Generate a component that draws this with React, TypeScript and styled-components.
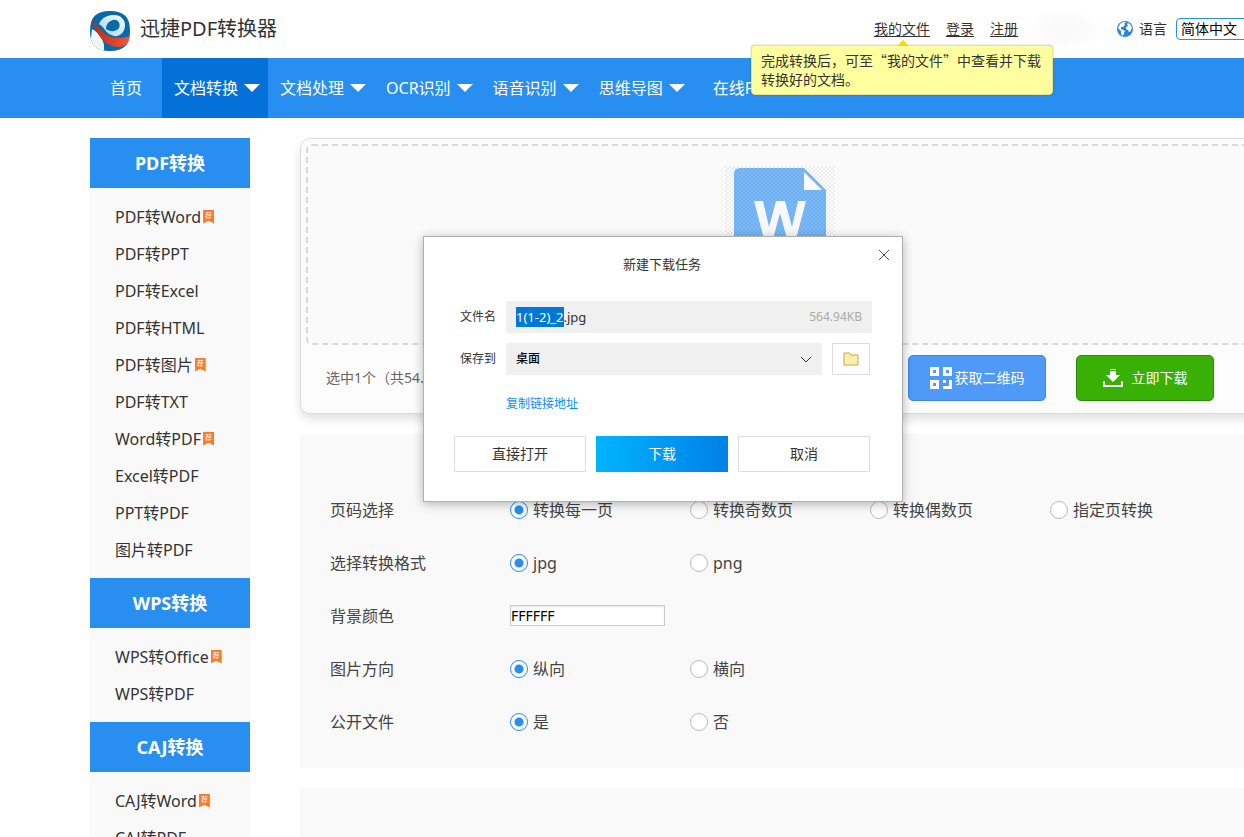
import React, { useEffect, useId, useRef } from "react";
import styled, { createGlobalStyle, css } from "styled-components";

const GlobalStyle = createGlobalStyle`
  * { box-sizing: border-box; }
  body {
    margin: 0;
    background: #fff;
    color: #333;
    font-family: "Noto Sans", "Noto Sans CJK SC", sans-serif;
    font-size: 16px;
  }
  button, input, select { font: inherit; }
`;

const Page = styled.div`
  position: relative;
  min-height: 100vh;
  max-height: 100vh;
  overflow: hidden;
`;

/* ---------- header ---------- */

const Header = styled.header`
  display: flex;
  align-items: center;
  height: 58px;
  padding-left: 90px;
  margin-right: -16px;
`;

const Brand = styled.a`
  display: flex;
  align-items: center;
  gap: 10px;
  margin-right: auto;
  color: #333;
  font-size: 20px;
  line-height: 28px;
  text-decoration: none;
  svg { margin-top: 4px; }
`;

const UserLinks = styled.nav`
  display: flex;
  gap: 16px;
  font-size: 14px;
  line-height: 20px;
  a { color: #333; text-underline-offset: 2px; }
`;

const Smudge = styled.div`
  width: 80px;
  height: 40px;
  margin: 0 13px 0 6px;
  border-radius: 50%;
  background: radial-gradient(closest-side, #fafafa 50%, #fff);
`;

const Language = styled.label`
  display: flex;
  align-items: center;
  font-size: 14px;
  line-height: 20px;
  svg { margin-right: 6px; }
`;

const LanguageSelect = styled.select`
  width: 84px;
  height: 22px;
  margin-left: 9px;
  padding: 0 4px;
  appearance: none;
  border: 1px solid #288ef0;
  border-radius: 4px;
  background: #fff;
  color: #000;
  font-size: 14px;
  line-height: 20px;
`;

const Tip = styled.div`
  position: absolute;
  top: 45px;
  left: 751px;
  z-index: 2;
  width: 302px;
  padding: 5px 9px;
  border: 1px solid #e8e48c;
  border-radius: 4px;
  background: #ffff9f;
  box-shadow: 0 0 2px rgba(0, 0, 0, 0.25);
  font-size: 14px;
  line-height: 19px;
  font-family: "Noto Sans CJK SC", sans-serif;
  &::before {
    content: "";
    position: absolute;
    top: -6px;
    left: 145px;
    border: 6px solid transparent;
    border-top: 0;
    border-bottom-color: #ffd800;
  }
`;

/* ---------- main navigation ---------- */

const NavBar = styled.nav`
  display: flex;
  height: 60px;
  padding-left: 90px;
  background: #288ef0;
`;

const NavLink = styled.a<{ $active?: boolean; $menu?: boolean }>`
  display: flex;
  align-items: center;
  gap: 6px;
  padding: ${(p) => (p.$menu ? "0 8px 0 12px" : "0 20px")};
  background: ${(p) => (p.$active ? "#0470d8" : "transparent")};
  color: #fff;
  line-height: 24px;
  white-space: nowrap;
  text-decoration: none;
`;

const Caret = styled.span`
  border: 8px solid transparent;
  border-top-color: #fff;
  border-bottom: 0;
`;

/* ---------- body columns ---------- */

const Columns = styled.div`
  display: flex;
  gap: 50px;
  margin: 20px -16px 0 90px;
`;

const Sidebar = styled.aside`
  flex: 0 0 160px;
  background: #f9f9f9;
`;

const SideTitle = styled.h2`
  margin: 0;
  background: #288ef0;
  color: #fff;
  font-size: 18px;
  font-weight: 700;
  line-height: 50px;
  text-align: center;
`;

const SideList = styled.ul`
  margin: 0;
  padding: 10px 0 10px 25px;
  list-style: none;
`;

const SideItem = styled.li`
  display: flex;
  align-items: center;
  gap: 2px;
  height: 37px;
  a { color: #333; line-height: 24px; text-decoration: none; }
`;

const Ribbon = styled.span`
  width: 11px;
  height: 14px;
  background: #ff7a22;
  clip-path: polygon(0 0, 100% 0, 100% 100%, 50% 80%, 0 100%);
  color: #fff;
  font-size: 7px;
  line-height: 12px;
  text-align: center;
`;

const Main = styled.main`
  flex: 1;
  min-width: 0;
  display: flex;
  flex-direction: column;
  gap: 20px;
`;

const UploadCard = styled.section`
  padding: 5px;
  border: 1px solid #dcdcdc;
  border-radius: 10px;
  background: #fcfcfc;
  box-shadow: 0 5px 10px rgba(0, 0, 0, 0.12);
`;

const DropZone = styled.div`
  display: flex;
  justify-content: center;
  height: 201px;
  padding-top: 20px;
  border: 2px dashed #d9d9d9;
  border-radius: 6px;
  background: #fafafa;
`;

const UploadFooter = styled.div`
  display: flex;
  align-items: center;
  gap: 30px;
  padding: 10px 40px 7px 20px;
`;

const Selected = styled.span`
  margin-right: auto;
  color: #666;
  font-size: 14px;
  line-height: 20px;
`;

const ActionButton = styled.button<{ $green?: boolean }>`
  display: flex;
  align-items: center;
  justify-content: center;
  gap: ${(p) => (p.$green ? "9px" : "3px")};
  width: 138px;
  height: 46px;
  padding: 0;
  border: 1px solid ${(p) => (p.$green ? "#2a8a06" : "#3a86e2")};
  border-radius: 5px;
  background: ${(p) => (p.$green ? "#38b006" : "#4f9af7")};
  color: #fff;
  font-size: 14px;
  line-height: 20px;
`;

const Options = styled.form`
  padding: 49px 0 20px 30px;
  background: #f9f9f9;
`;

const OptionRow = styled.div`
  display: flex;
  align-items: center;
  height: 53px;
  color: #444;
  line-height: 24px;
`;

const OptionName = styled.span`
  flex: 0 0 180px;
`;

const Choice = styled.label`
  flex: 0 0 180px;
  display: flex;
  align-items: center;
  gap: 5px;
`;

const Radio = styled.input`
  appearance: none;
  width: 18px;
  height: 18px;
  margin: 0;
  border: 1px solid #bbb;
  border-radius: 50%;
  background: #fff;
  &:checked {
    border-color: #288ef0;
    background: radial-gradient(circle, #288ef0 0 4px, #fff 5px);
  }
`;

const ColorInput = styled.input`
  width: 155px;
  height: 21px;
  padding: 0;
  border: 1px solid #ccc;
  background: #fff;
  box-shadow: inset 0 1px 2px rgba(0, 0, 0, 0.1);
  color: #000;
  font-size: 14px;
`;

const NextPanel = styled.section`
  height: 200px;
  background: #f9f9f9;
`;

/* ---------- download dialog ---------- */

const Dialog = styled.div`
  position: absolute;
  top: 236px;
  left: 423px;
  z-index: 3;
  width: 480px;
  padding: 17px 32px 29px 30px;
  border: 1px solid #b0b0b0;
  background: #fff;
  box-shadow: 0 2px 10px rgba(0, 0, 0, 0.28);
  font-size: 12px;
  line-height: 20px;
`;

const DialogTitle = styled.h1`
  margin: 0 0 27px;
  font-size: 13px;
  font-weight: 400;
  line-height: 20px;
  text-align: center;
`;

const CloseButton = styled.button`
  position: absolute;
  top: 12px;
  right: 12px;
  display: flex;
  padding: 0;
  border: 0;
  background: none;
`;

const Field = styled.div`
  display: flex;
  align-items: center;
  gap: 10px;
  margin-bottom: 10px;
  padding-left: 6px;
  label { flex: 0 0 36px; white-space: nowrap; }
`;

const fieldBox = css`
  display: flex;
  align-items: center;
  height: 32px;
  padding: 0 10px;
  background: #f0f0f0;
`;

const FileBox = styled.div`
  ${fieldBox}
  flex: 1;
  margin-right: -2px;
  color: #aaa;
`;

const FileInput = styled.input`
  flex: 1;
  min-width: 0;
  padding: 0;
  border: 0;
  outline: 0;
  background: none;
  color: #333;
  font-size: 13px;
  &::selection { background: #0078d7; color: #fff; }
`;

const FolderBox = styled.div`
  position: relative;
  flex: 1;
  svg { position: absolute; top: 13px; right: 10px; pointer-events: none; }
`;

const FolderSelect = styled.select`
  ${fieldBox}
  width: 100%;
  appearance: none;
  border: 0;
  border-radius: 0;
  color: #000;
  font-weight: 500;
`;

const BrowseButton = styled.button`
  display: flex;
  align-items: center;
  justify-content: center;
  width: 38px;
  height: 32px;
  padding: 0;
  border: 1px solid #dedede;
  background: #fff;
`;

const CopyLink = styled.a`
  display: block;
  margin: 19px 0 22px 52px;
  color: #0a8cff;
  text-decoration: none;
`;

const DialogActions = styled.div`
  display: flex;
  gap: 10px;
`;

const DialogButton = styled.button<{ $primary?: boolean }>`
  width: 132px;
  height: 36px;
  padding: 0;
  border: ${(p) => (p.$primary ? "0" : "1px solid #dedede")};
  background: ${(p) => (p.$primary ? "linear-gradient(90deg, #00b4ff, #0080e6)" : "#fff")};
  color: ${(p) => (p.$primary ? "#fff" : "#333")};
  font-size: 14px;
  line-height: 20px;
`;

/* ---------- drawings ---------- */

const Logo = () => (
  <svg width="40" height="40" viewBox="0 0 40 40" aria-hidden="true">
    <defs>
      <clipPath id="logo-shape">
        <path d="M20 0C34 0 40 6 40 20S34 40 20 40 0 34 0 20 6 0 20 0Z" />
      </clipPath>
      <linearGradient id="logo-red" x1="0" x2="1">
        <stop offset="0" stopColor="#c6260f" />
        <stop offset="1" stopColor="#f0573d" />
      </linearGradient>
      <linearGradient id="logo-ring" x1="0" x2="1" y1="1" y2="0">
        <stop offset="0" stopColor="#a9d5ee" />
        <stop offset="1" stopColor="#f4fbff" />
      </linearGradient>
    </defs>
    <g clipPath="url(#logo-shape)">
      <rect width="40" height="40" fill="#0a69a8" />
      <path d="M2 18C8 21 13 28 14 34L14 40H5L0 36Z" fill="#eef7fc" />
      <path
        fillRule="evenodd"
        d="M9 13C12 6 18 4 24 4C31 4 35 9 35 14C35 21 30 26 24 25C20 24 17 22 15 19C14 17 12 15 9 13ZM16 18C20 21 26 21 29 17C31 13 28 8 23 9C19 10 16 13 16 18Z"
        fill="url(#logo-ring)"
      />
      <path d="M2 8C9 18 16 27 27 27C33 27 37 26 40 25V30C37 34 33 36 28 36C15 36 5 22 2 8Z" fill="url(#logo-red)" />
    </g>
  </svg>
);

const Globe = () => (
  <svg width="16" height="16" viewBox="0 0 16 16" aria-hidden="true">
    <circle cx="8" cy="8" r="8" fill="#2a86dc" />
    <path d="M3 3L6 1L9 1L7 3L8 4L6 6L4 6L4 8L6 9L8 10L7 12L6 15L4 13L4 10L1 7Z" fill="#fff" />
    <path d="M11 2L13 3L15 7L14 9L13 11L12 11L11 9L9 8L9 6L11 5L10 3Z" fill="#fff" />
  </svg>
);

const WordFile = () => (
  <svg width="110" height="110" viewBox="0 0 110 110" aria-hidden="true">
    <defs>
      <pattern id="checks" width="4" height="4" patternUnits="userSpaceOnUse">
        <rect width="4" height="4" fill="#fff" />
        <path d="M0 0H2V2H0ZM2 2H4V4H2Z" fill="#ececec" />
      </pattern>
      <pattern id="blue-checks" width="4" height="4" patternUnits="userSpaceOnUse">
        <rect width="4" height="4" fill="#7ab8f7" />
        <path d="M0 0H2V2H0ZM2 2H4V4H2Z" fill="#72b1f0" />
      </pattern>
    </defs>
    <rect width="110" height="110" fill="url(#checks)" />
    <path d="M15 2H79L101 24V108H9V8Q9 2 15 2Z" fill="url(#blue-checks)" />
    <path d="M79 6V24H97Z" fill="#fbfbfb" />
    <path d="M29 35H38L44 61L51 35H60L67 61L73 35H81L71 73H62L55 47L48 73H39Z" fill="#f8f8f8" />
  </svg>
);

const QrIcon = () => (
  <svg width="22" height="22" viewBox="0 0 22 22" fill="#fff" aria-hidden="true">
    <path fillRule="evenodd" d="M0 0H9V9H0ZM3 3V6H6V3ZM13 0H22V9H13ZM16 3V6H19V3ZM0 13H9V22H0ZM3 16V19H6V16Z" />
    <path d="M13 13H16V16H13ZM19 13H22V22H13V19H19Z" />
  </svg>
);

const DownloadIcon = () => (
  <svg width="20" height="18" viewBox="0 0 20 18" fill="#fff" aria-hidden="true">
    <path d="M7 0H13V1H7ZM7 2H13V6H17L10 13L3 6H7ZM0 12H2V16H18V12H20V18H0Z" />
  </svg>
);

const FolderIcon = () => (
  <svg width="16" height="14" viewBox="0 0 16 14" aria-hidden="true">
    <path d="M1 1H6L8 3H15V13H1Z" fill="#fff0b0" stroke="#c9a548" />
  </svg>
);

/* ---------- data ---------- */

const navItems = [
  { text: "首页" },
  { text: "文档转换", menu: true, active: true },
  { text: "文档处理", menu: true },
  { text: "OCR识别", menu: true },
  { text: "语音识别", menu: true },
  { text: "思维导图", menu: true },
  { text: "在线PDF" },
];

const sideGroups = [
  {
    title: "PDF转换",
    items: ["PDF转Word*", "PDF转PPT", "PDF转Excel", "PDF转HTML", "PDF转图片*", "PDF转TXT", "Word转PDF*", "Excel转PDF", "PPT转PDF", "图片转PDF"],
  },
  { title: "WPS转换", items: ["WPS转Office*", "WPS转PDF"] },
  { title: "CAJ转换", items: ["CAJ转Word*", "CAJ转PDF"] },
];

const RadioRow = ({ name, choices }: { name: string; choices: string[] }) => {
  const id = useId();
  return (
    <OptionRow role="radiogroup" aria-labelledby={id}>
      <OptionName id={id}>{name}</OptionName>
      {choices.map((choice, i) => (
        <Choice key={choice}>
          <Radio type="radio" name={name} defaultChecked={i === 0} />
          {choice}
        </Choice>
      ))}
    </OptionRow>
  );
};

const DownloadDialog = () => {
  const fileRef = useRef<HTMLInputElement>(null);
  useEffect(() => {
    const input = fileRef.current;
    if (!input) return;
    input.focus({ preventScroll: true });
    input.setSelectionRange(0, input.value.lastIndexOf("."));
  }, []);
  return (
    <Dialog role="dialog" aria-labelledby="dialog-title">
      <CloseButton type="button" aria-label="关闭">
        <svg width="12" height="12" viewBox="0 0 12 12" stroke="#555" aria-hidden="true">
          <path d="M1 1L11 11M11 1L1 11" />
        </svg>
      </CloseButton>
      <DialogTitle id="dialog-title">新建下载任务</DialogTitle>
      <Field>
        <label htmlFor="file-name">文件名</label>
        <FileBox>
          <FileInput id="file-name" ref={fileRef} defaultValue="1(1-2)_2.jpg" />
          <span>564.94KB</span>
        </FileBox>
      </Field>
      <Field>
        <label htmlFor="save-to">保存到</label>
        <FolderBox>
          <FolderSelect id="save-to">
            <option>桌面</option>
          </FolderSelect>
          <svg width="12" height="8" viewBox="0 0 12 8" fill="none" stroke="#333" aria-hidden="true">
            <path d="M1 1L6 6L11 1" />
          </svg>
        </FolderBox>
        <BrowseButton type="button" aria-label="选择文件夹"><FolderIcon /></BrowseButton>
      </Field>
      <CopyLink href="#">复制链接地址</CopyLink>
      <DialogActions>
        <DialogButton type="button">直接打开</DialogButton>
        <DialogButton type="button" $primary>下载</DialogButton>
        <DialogButton type="button">取消</DialogButton>
      </DialogActions>
    </Dialog>
  );
};

export default function App() {
  return (
    <Page>
      <GlobalStyle />
      <Header>
        <Brand href="#"><Logo />迅捷PDF转换器</Brand>
        <UserLinks>
          <a href="#">我的文件</a>
          <a href="#">登录</a>
          <a href="#">注册</a>
        </UserLinks>
        <Smudge />
        <Language>
          <Globe />语言
          <LanguageSelect><option>简体中文</option></LanguageSelect>
        </Language>
      </Header>
      <Tip>完成转换后，可至“我的文件”中查看并下载转换好的文档。</Tip>
      <NavBar>
        {navItems.map((item) => (
          <NavLink href="#" key={item.text} $menu={item.menu} $active={item.active}>
            {item.text}
            {item.menu && <Caret />}
          </NavLink>
        ))}
      </NavBar>
      <Columns>
        <Sidebar>
          {sideGroups.map((group) => (
            <section key={group.title}>
              <SideTitle>{group.title}</SideTitle>
              <SideList>
                {group.items.map((item) => (
                  <SideItem key={item}>
                    <a href="#">{item.replace("*", "")}</a>
                    {item.endsWith("*") && <Ribbon>荐</Ribbon>}
                  </SideItem>
                ))}
              </SideList>
            </section>
          ))}
        </Sidebar>
        <Main>
          <UploadCard>
            <DropZone><WordFile /></DropZone>
            <UploadFooter>
              <Selected>选中1个（共54.</Selected>
              <ActionButton type="button"><QrIcon />获取二维码</ActionButton>
              <ActionButton type="button" $green><DownloadIcon />立即下载</ActionButton>
            </UploadFooter>
          </UploadCard>
          <Options>
            <RadioRow name="页码选择" choices={["转换每一页", "转换奇数页", "转换偶数页", "指定页转换"]} />
            <RadioRow name="选择转换格式" choices={["jpg", "png"]} />
            <OptionRow>
              <OptionName as="label" htmlFor="bg-color">背景颜色</OptionName>
              <ColorInput id="bg-color" defaultValue="FFFFFF" />
            </OptionRow>
            <RadioRow name="图片方向" choices={["纵向", "横向"]} />
            <RadioRow name="公开文件" choices={["是", "否"]} />
          </Options>
          <NextPanel />
        </Main>
      </Columns>
      <DownloadDialog />
    </Page>
  );
}
